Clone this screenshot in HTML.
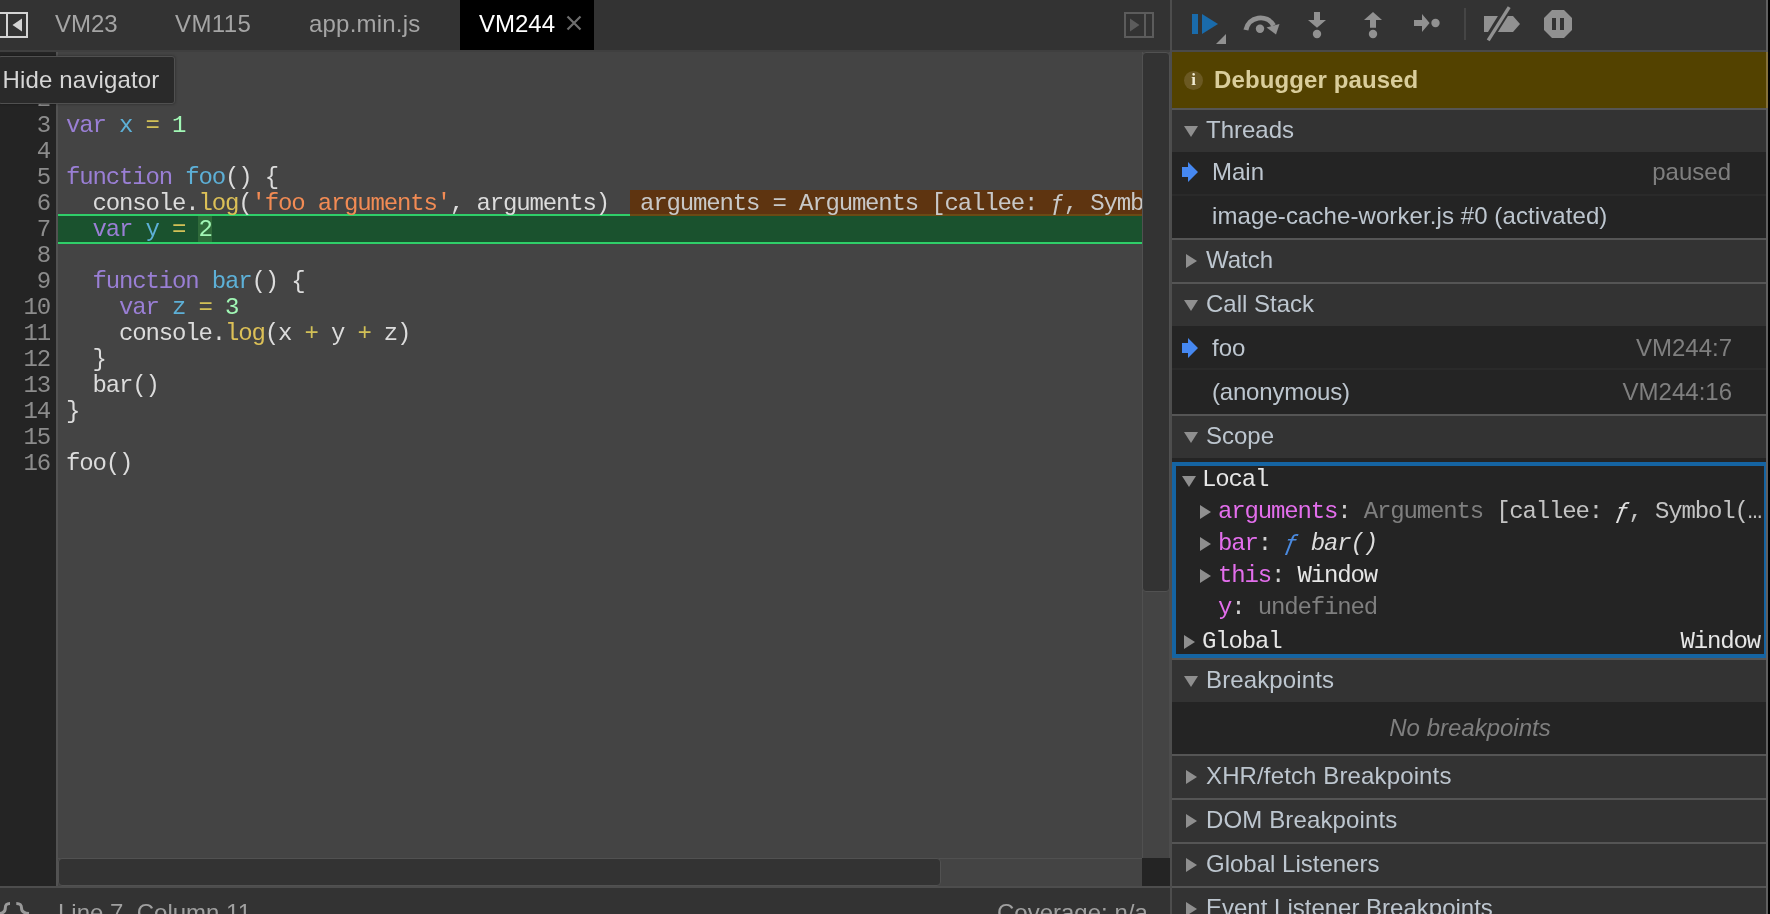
<!DOCTYPE html>
<html><head><meta charset="utf-8">
<style>
*{box-sizing:border-box;margin:0;padding:0}
html,body{width:1770px;height:914px;overflow:hidden;background:#333;font-family:"Liberation Sans",sans-serif;font-size:24px;color:#bdc6cf}
.abs{position:absolute}
#root{will-change:transform;position:relative;width:1770px;height:914px;overflow:hidden}
/* ---------- left: tab bar ---------- */
#tabbar{left:0;top:0;width:1170px;height:50px;background:#333}
#tabline{left:0;top:50px;width:1170px;height:2px;background:#3f3f3f}
.tab{position:absolute;top:0;height:50px;line-height:48px;font-size:24px;color:#a5a5a5;white-space:nowrap}
.tab.sel{background:#000;color:#fff}
/* ---------- editor ---------- */
#gutter{left:0;top:52px;width:56px;height:834px;background:#242424}
#gutline{left:56px;top:52px;width:2px;height:834px;background:#525252}
#code{left:58px;top:52px;width:1084px;height:806px;background:#444}
.ln{position:absolute;left:0;width:50px;text-align:right;font-family:"Liberation Mono",monospace;font-size:24px;letter-spacing:-1.16px;margin-top:1px;line-height:26px;height:26px;color:#8c8c8c}
.cl{position:absolute;left:66px;font-family:"Liberation Mono",monospace;font-size:24px;letter-spacing:-1.16px;margin-top:1px;line-height:26px;height:26px;color:#dcdcdc;white-space:pre}
.k{color:#9a7fd5}.d{color:#5db0d7}.o{color:#d2c057}.n{color:#a1f7b5}.s{color:#f28b54}.p{color:#dcc057}
/* ---------- right sidebar ---------- */
#split{left:1170px;top:0;width:2px;height:914px;background:#4d4d4d}
#side{left:1172px;top:0;width:598px;height:914px;background:#333}
.hdr{position:absolute;left:0;width:598px;background:#333;border-top:2px solid #555;color:#bdc6cf;font-size:24px;white-space:nowrap}
.hdr span{position:absolute;left:34px}
.row{position:absolute;left:0;width:598px;background:#242424;color:#bdc6cf;font-size:24px;white-space:nowrap}
.tri-d{position:absolute;width:0;height:0;border-left:7px solid transparent;border-right:7px solid transparent;border-top:11px solid #8f8f8f}
.tri-r{position:absolute;width:0;height:0;border-top:7px solid transparent;border-bottom:7px solid transparent;border-left:11px solid #8f8f8f}
.nm{color:#e36eec}
.mono{font-family:"Liberation Mono",monospace;font-size:24px;letter-spacing:-1.16px;margin-left:-1px}
</style></head><body><div id="root">

<!-- TABBAR -->
<div id="tabbar" class="abs">
<svg class="abs" style="left:0;top:0" width="40" height="50" viewBox="0 0 40 50"><rect x="-1" y="13" width="28" height="24" fill="none" stroke="#d4d4d4" stroke-width="2"/><rect x="6" y="13" width="2" height="24" fill="#d4d4d4"/><path d="M12.5 25 L22 18.5 L22 31.5 Z" fill="#d4d4d4"/></svg>
<div class="tab" style="left:55px">VM23</div>
<div class="tab" style="left:175px;letter-spacing:0.4px">VM115</div>
<div class="tab" style="left:309px;letter-spacing:0.2px">app.min.js</div>
<div class="tab sel" style="left:460px;width:134px;padding-left:19px">VM244</div>
<svg class="abs" style="left:564px;top:13px" width="20" height="20" viewBox="0 0 20 20"><path d="M3.5 3.5 L16.5 16.5 M16.5 3.5 L3.5 16.5" stroke="#6e6e6e" stroke-width="2.2" fill="none"/></svg>
<svg class="abs" style="left:1122px;top:10px" width="34" height="30" viewBox="0 0 34 30"><rect x="3" y="3" width="28" height="24" fill="none" stroke="#5c5c5c" stroke-width="2"/><rect x="22" y="3" width="2" height="24" fill="#5c5c5c"/><path d="M17.5 15 L8 8.5 L8 21.5 Z" fill="#5c5c5c"/></svg>
</div>
<div id="tabline" class="abs"></div>

<!-- EDITOR -->
<div id="gutter" class="abs"></div>
<div id="gutline" class="abs"></div>
<div id="code" class="abs"></div>
<div class="abs" style="left:58px;top:214px;width:1084px;height:30px;background:#1a522e;border-top:2px solid #2fcf69;border-bottom:2px solid #2fcf69"></div>
<div class="abs" style="left:198px;top:216px;width:14px;height:26px;background:#2f6b3a"></div>
<div class="abs" style="left:630px;top:190px;width:512px;height:24px;background:#5e3410"></div>
<div class="abs" style="left:630px;top:214px;width:512px;height:2px;background:#6b4a14"></div>
<div class="cl" style="left:640px;top:190px;color:#c8c8c8;width:502px;overflow:hidden">arguments = Arguments [callee: ƒ, Symbol(Symbol.iterator)</div>
<div class="ln" style="top:86px">2</div>
<div class="ln" style="top:112px">3</div>
<div class="ln" style="top:138px">4</div>
<div class="ln" style="top:164px">5</div>
<div class="ln" style="top:190px">6</div>
<div class="ln" style="top:216px">7</div>
<div class="ln" style="top:242px">8</div>
<div class="ln" style="top:268px">9</div>
<div class="ln" style="top:294px">10</div>
<div class="ln" style="top:320px">11</div>
<div class="ln" style="top:346px">12</div>
<div class="ln" style="top:372px">13</div>
<div class="ln" style="top:398px">14</div>
<div class="ln" style="top:424px">15</div>
<div class="ln" style="top:450px">16</div>
<div class="cl" style="top:112px"><span class="k">var</span> <span class="d">x</span> <span class="o">=</span> <span class="n">1</span></div>
<div class="cl" style="top:164px"><span class="k">function</span> <span class="d">foo</span>() {</div>
<div class="cl" style="top:190px">  console.<span class="p">log</span>(<span class="s">'foo arguments'</span>, arguments)</div>
<div class="cl" style="top:216px">  <span class="k">var</span> <span class="d">y</span> <span class="o">=</span> <span class="n">2</span></div>
<div class="cl" style="top:268px">  <span class="k">function</span> <span class="d">bar</span>() {</div>
<div class="cl" style="top:294px">    <span class="k">var</span> <span class="d">z</span> <span class="o">=</span> <span class="n">3</span></div>
<div class="cl" style="top:320px">    console.<span class="p">log</span>(x <span class="o">+</span> y <span class="o">+</span> z)</div>
<div class="cl" style="top:346px">  }</div>
<div class="cl" style="top:372px">  bar()</div>
<div class="cl" style="top:398px">}</div>
<div class="cl" style="top:450px">foo()</div>
<div class="abs" style="left:1142px;top:52px;width:28px;height:806px;background:#444;border-left:1px solid #505050;border-right:1px solid #4c4c4c"></div>
<div class="abs" style="left:1142px;top:52px;width:28px;height:540px;background:#333;border:1px solid #515151;border-radius:4px"></div>
<div class="abs" style="left:58px;top:858px;width:1084px;height:28px;background:#444;border-top:1px solid #505050"></div>
<div class="abs" style="left:58px;top:858px;width:883px;height:28px;background:#333;border:1px solid #515151;border-radius:4px"></div>
<div class="abs" style="left:1142px;top:858px;width:28px;height:28px;background:#242424"></div>
<div class="abs" style="left:0;top:886px;width:1170px;height:2px;background:#4d4d4d"></div>
<div class="abs" style="left:0;top:888px;width:1170px;height:26px;background:#333"></div>
<svg class="abs" style="left:0;top:896px" width="32" height="18" viewBox="0 896 32 18"><path d="M10 903.500 C6 903.500 5.300 905 5.300 908 C5.300 911.500 3.500 913.200 -1 913.500" fill="none" stroke="#9a9a9a" stroke-width="3"/><path d="M16.300 903.500 C20.500 903.500 21.500 905 21.500 908 C21.500 911.500 23.500 913.200 29 913.500" fill="none" stroke="#9a9a9a" stroke-width="3"/></svg>
<div class="abs" style="left:58px;top:899px;font-size:24px;color:#a0a0a0;line-height:28px;white-space:nowrap">Line 7, Column 11</div>
<div class="abs" style="left:997px;top:899px;font-size:24px;color:#a0a0a0;line-height:28px;white-space:nowrap">Coverage: n/a</div>
<div class="abs" style="left:-2px;top:56px;width:177px;height:48px;background:#2a2a2a;border:1px solid #505050;border-radius:3px;box-shadow:0 0 3px rgba(0,0,0,.4)"></div>
<div class="abs" style="left:2.5px;top:66px;font-size:24px;color:#d6d6d6;line-height:28px;white-space:nowrap;letter-spacing:0.15px">Hide navigator</div>

<!-- SIDEBAR -->
<div id="split" class="abs"></div>
<div id="side" class="abs">
<svg class="abs" style="left:0;top:0" width="598" height="50" viewBox="1172 0 598 50">
<rect x="1192" y="14" width="6" height="20" fill="#1a6bab"/><path d="M1202 14 L1218 24 L1202 34 Z" fill="#1a6bab"/>
<path d="M1226 34 L1226 44 L1216 44 Z" fill="#919191"/>
<path d="M1245.9 30 A15 15 0 0 1 1273.6 25.4" fill="none" stroke="#919191" stroke-width="5"/>
<path d="M1266.5 27.5 L1279.5 24 L1276 34.5 Z" fill="#919191"/>
<circle cx="1260" cy="28.8" r="4.2" fill="#919191"/>
<path d="M1314 12 H1320 V20 H1326 L1317 27.8 L1308 20 H1314 Z" fill="#919191"/><circle cx="1317" cy="34" r="4.2" fill="#919191"/>
<path d="M1370 27.8 H1376 V20 H1382 L1373 12 L1364 20 H1370 Z" fill="#919191"/><circle cx="1373" cy="34" r="4.2" fill="#919191"/>
<path d="M1414 20 H1422 V14 L1429.6 23 L1422 32 V26 H1414 Z" fill="#919191"/><circle cx="1435.5" cy="23" r="4.2" fill="#919191"/>
<rect x="1464" y="8" width="2" height="32" fill="#454545"/>
<path d="M1484 16 H1513 L1520 24 L1513 32 H1484 Z" fill="#919191"/>
<path d="M1510.4 4 L1486.4 42.4" stroke="#333" stroke-width="8.4" fill="none"/>
<path d="M1509.2 7.2 L1488.2 40.4" stroke="#919191" stroke-width="3.4" fill="none"/>
<path d="M1552 10 H1564 L1572 18 V30 L1564 38 H1552 L1544 30 V18 Z" fill="#919191"/>
<rect x="1552" y="18" width="4" height="12" fill="#333"/><rect x="1560" y="18" width="4" height="12" fill="#333"/>
</svg>
<div class="abs" style="left:0;top:50px;width:598px;height:2px;background:#4a4a4a"></div>
<div class="abs" style="left:0;top:52px;width:598px;height:56px;background:#534200"></div>
<div class="abs" style="left:12px;top:70.500px;width:19px;height:19px;border-radius:50%;background:#6b5922"></div>
<div class="abs" style="left:12px;top:69px;width:19px;text-align:center;font-family:'Liberation Serif',serif;font-weight:bold;font-size:17px;line-height:22px;color:#f0ead2">i</div>
<div class="abs" style="left:42px;top:66px;font-size:24px;font-weight:bold;line-height:28px;color:#d9cd9b;white-space:nowrap;letter-spacing:0.11px">Debugger paused</div>
<div class="hdr" style="top:108px;height:44px"></div>
<div class="tri-d" style="left:12px;top:126px"></div>
<div class="abs" style="left:34px;top:116px;line-height:28px;white-space:nowrap">Threads</div>
<div class="row" style="top:152px;height:44px"></div>
<div class="abs" style="left:0;top:194px;width:598px;height:2px;background:#2a2a2a"></div>
<svg class="abs" style="left:9px;top:161px" width="18" height="22" viewBox="0 0 18 22"><path d="M1 6 H7 V1 L17 11 L7 21 V16 H1 Z" fill="#4688f1"/></svg>
<div class="abs" style="left:40px;top:158px;line-height:28px;white-space:nowrap">Main</div>
<div class="abs" style="right:39px;top:158px;line-height:28px;white-space:nowrap;color:#7f7f7f">paused</div>
<div class="row" style="top:196px;height:42px"></div>
<div class="abs" style="left:40px;top:202px;line-height:28px;white-space:nowrap;letter-spacing:0.09px">image-cache-worker.js #0 (activated)</div>
<div class="hdr" style="top:238px;height:44px"></div>
<div class="tri-r" style="left:14px;top:254px"></div>
<div class="abs" style="left:34px;top:246px;line-height:28px;white-space:nowrap">Watch</div>
<div class="hdr" style="top:282px;height:44px"></div>
<div class="tri-d" style="left:12px;top:300px"></div>
<div class="abs" style="left:34px;top:290px;line-height:28px;white-space:nowrap">Call Stack</div>
<div class="row" style="top:326px;height:44px"></div>
<div class="abs" style="left:0;top:368px;width:598px;height:2px;background:#2a2a2a"></div>
<svg class="abs" style="left:9px;top:337px" width="18" height="22" viewBox="0 0 18 22"><path d="M1 6 H7 V1 L17 11 L7 21 V16 H1 Z" fill="#4688f1"/></svg>
<div class="abs" style="left:40px;top:334px;line-height:28px;white-space:nowrap">foo</div>
<div class="abs" style="right:38px;top:334px;line-height:28px;white-space:nowrap;color:#7f7f7f">VM244:7</div>
<div class="row" style="top:370px;height:44px"></div>
<div class="abs" style="left:40px;top:378px;line-height:28px;white-space:nowrap;letter-spacing:-0.2px">(anonymous)</div>
<div class="abs" style="right:38px;top:378px;line-height:28px;white-space:nowrap;color:#7f7f7f">VM244:16</div>
<div class="hdr" style="top:414px;height:44px"></div>
<div class="tri-d" style="left:12px;top:432px"></div>
<div class="abs" style="left:34px;top:422px;line-height:28px;white-space:nowrap">Scope</div>
<div class="abs" style="left:0;top:458px;width:598px;height:200px;background:#242424"></div>
<div class="abs" style="left:0;top:462px;width:596px;height:196px;border:4px solid #1564a2"></div>
<div class="abs mono" style="left:31px;top:467px;line-height:26px;white-space:pre"><span style="color:#e6e6e6">Local</span></div>
<div class="tri-d" style="left:10px;top:476px"></div>
<div class="abs mono" style="left:47px;top:499px;line-height:26px;white-space:pre"><span class="nm">arguments</span><span style="color:#d0d0d0">: </span><span style="color:#7f7f7f">Arguments </span><span style="color:#c3c3c3">[callee: <i style="color:#e0e0e0">ƒ</i>, Symbol(…</span></div>
<div class="tri-r" style="left:28px;top:505px"></div>
<div class="abs mono" style="left:47px;top:531px;line-height:26px;white-space:pre"><span class="nm">bar</span><span style="color:#d0d0d0">: </span><i style="color:#4a8ae0">ƒ</i> <i style="color:#dcdcdc">bar()</i></div>
<div class="tri-r" style="left:28px;top:537px"></div>
<div class="abs mono" style="left:47px;top:563px;line-height:26px;white-space:pre"><span class="nm">this</span><span style="color:#d0d0d0">: </span><span style="color:#e6e6e6">Window</span></div>
<div class="tri-r" style="left:28px;top:569px"></div>
<div class="abs mono" style="left:47px;top:595px;line-height:26px;white-space:pre"><span class="nm">y</span><span style="color:#d0d0d0">: </span><span style="color:#7f7f7f">undefined</span></div>
<div class="abs mono" style="left:31px;top:629px;line-height:26px;white-space:pre"><span style="color:#e6e6e6">Global</span></div>
<div class="tri-r" style="left:12px;top:635px"></div>
<div class="abs mono" style="right:10px;top:629px;line-height:26px;white-space:pre;color:#e6e6e6">Window</div>
<div class="hdr" style="top:658px;height:44px"></div>
<div class="tri-d" style="left:12px;top:676px"></div>
<div class="abs" style="left:34px;top:666px;line-height:28px;white-space:nowrap;letter-spacing:0.13px">Breakpoints</div>
<div class="row" style="top:702px;height:52px"></div>
<div class="abs" style="left:0;width:596px;text-align:center;top:714px;line-height:28px;font-style:italic;color:#7f7f7f">No breakpoints</div>
<div class="hdr" style="top:754px;height:44px"></div>
<div class="tri-r" style="left:14px;top:770px"></div>
<div class="abs" style="left:34px;top:762px;line-height:28px;white-space:nowrap;letter-spacing:0.13px">XHR/fetch Breakpoints</div>
<div class="hdr" style="top:798px;height:44px"></div>
<div class="tri-r" style="left:14px;top:814px"></div>
<div class="abs" style="left:34px;top:806px;line-height:28px;white-space:nowrap;letter-spacing:0.13px">DOM Breakpoints</div>
<div class="hdr" style="top:842px;height:44px"></div>
<div class="tri-r" style="left:14px;top:858px"></div>
<div class="abs" style="left:34px;top:850px;line-height:28px;white-space:nowrap">Global Listeners</div>
<div class="hdr" style="top:886px;height:44px"></div>
<div class="tri-r" style="left:14px;top:902px"></div>
<div class="abs" style="left:34px;top:894px;line-height:28px;white-space:nowrap">Event Listener Breakpoints</div>
<div class="abs" style="left:594px;top:0;width:2px;height:914px;background:#606060"></div><div class="abs" style="left:594px;top:52px;width:2px;height:56px;background:#85713a"></div>
<div class="abs" style="left:596px;top:0;width:2px;height:914px;background:#000"></div>
</div>

</div></body></html>
